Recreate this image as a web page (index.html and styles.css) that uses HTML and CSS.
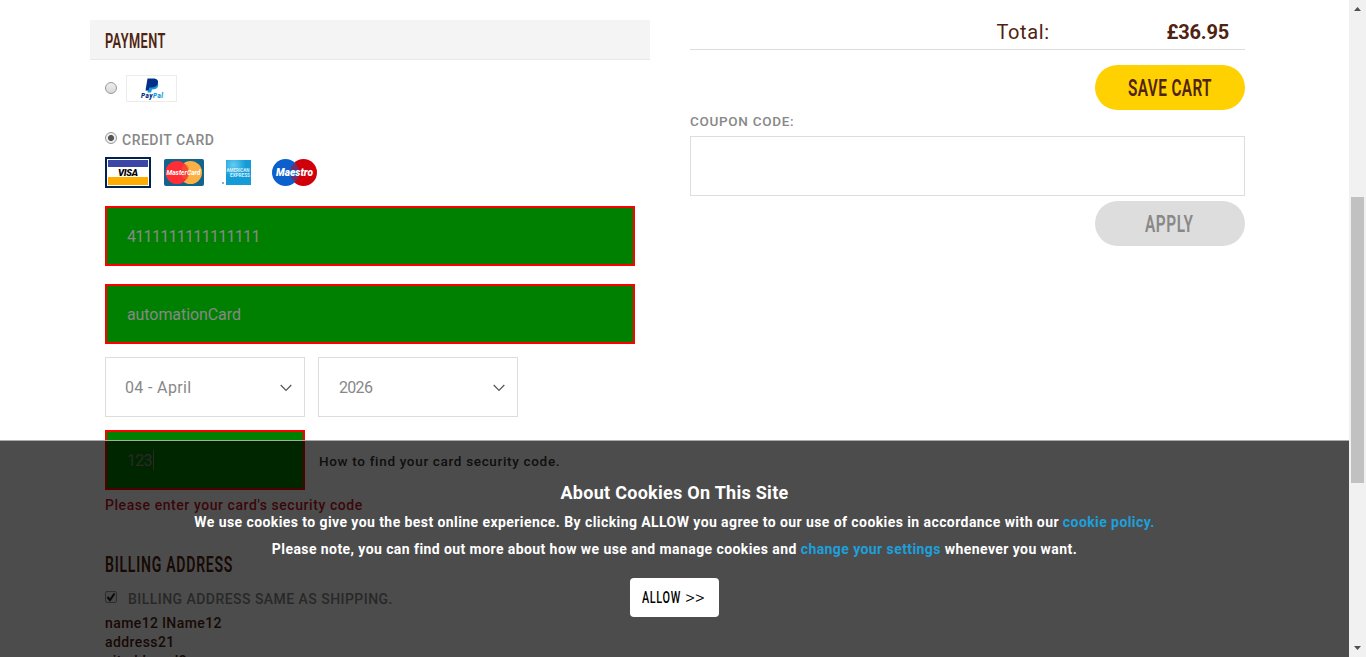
FILE: index.html
```html
<!DOCTYPE html>
<html lang="en">
<head>
<meta charset="utf-8">
<title>Checkout</title>
<link rel="stylesheet" href="styles.css">
</head>
<body>
<div class="window">
  <main class="page">
    <section class="payment">
      <h2 class="section-title"><span class="narrow t-payment">PAYMENT</span></h2>
      <div class="payment-body">
        <div class="paypal-row">
          <span class="radio"></span>
          <span class="paypal">
            <svg width="50" height="26" viewBox="0 0 50 26">
              <path d="M22 5.500h7q3 2 2 5-1 3-6 3l-1 3h-3.500z" fill="#179bd7"/>
              <path d="M20.500 2.500h7q5 1 3 6-2 3-6 3h-2l-1 3h-3z" fill="#003087"/>
              <text x="14" y="22" class="paypal-text" textLength="22"><tspan fill="#003087">Pay</tspan><tspan fill="#179bd7">Pal</tspan></text>
            </svg>
          </span>
        </div>
        <div class="credit-row"><span class="radio checked"></span><span class="t-credit">CREDIT CARD</span></div>
        <div class="cards">
          <svg width="46" height="31" viewBox="0 0 46 31">
            <path d="M0 0h46v31H0z" fill="#00224f"/><path d="M2 2h42v27H2z" fill="#fff"/>
            <path d="M3 3h40v7H3z" fill="#3a47a5"/><path d="M3 20h40v8H3z" fill="#ffad00"/>
            <text x="13" y="18.500" class="visa" textLength="20">VISA</text>
          </svg>
          <svg width="40" height="27" viewBox="0 0 40 27">
            <rect width="40" height="27" rx="2" fill="#11648c"/>
            <circle cx="26.500" cy="13.500" r="11.500" fill="#fdb044"/><circle cx="13" cy="13.500" r="11.500" fill="#ff2d36"/>
            <path d="M19 7h5M18 9h7M18 11h7M18 17h7M19 19h5" stroke="#e86b31"/>
            <text x="2.500" y="16" class="mastercard" textLength="34" lengthAdjust="spacingAndGlyphs">MasterCard</text>
          </svg>
          <svg width="30" height="27" viewBox="0 0 30 27">
            <defs><radialGradient id="amex" cx=".3" cy=".2"><stop stop-color="#63cdf2"/><stop offset="1" stop-color="#159bd7"/></radialGradient></defs>
            <path d="M5 1h25v25H5z" fill="url(#amex)"/><path d="M1 23h2v2H1z" fill="#72bdcf"/>
            <text x="5.500" y="13" class="amex" textLength="23" lengthAdjust="spacingAndGlyphs">AMERICAN</text>
            <text x="9" y="18" class="amex" textLength="20" lengthAdjust="spacingAndGlyphs">EXPRESS</text>
          </svg>
          <svg width="46" height="27" viewBox="0 0 46 27">
            <circle cx="31.500" cy="13.500" r="13.500" fill="#d0000b"/><circle cx="13.500" cy="13.500" r="13.500" fill="#0b60ce"/>
            <path d="M21 6h4M19 8h7M19 10h8M19 18h8M20 20h6M22 22h3" stroke="#d0000b"/>
            <text x="4" y="17" class="maestro" textLength="37" lengthAdjust="spacingAndGlyphs">Maestro</text>
          </svg>
        </div>
        <div class="field invalid"><span class="t-number">4111111111111111</span></div>
        <div class="field invalid second"><span class="t-holder">automationCard</span></div>
        <div class="selects">
          <div class="field half"><span class="t-month">04 - April</span><svg width="12" height="8" viewBox="0 0 12 8"><path d="M.700 1l5.300 5.500L11.300 1" fill="none" stroke="#555" stroke-width="1.200"/></svg></div>
          <div class="field half"><span class="t-year">2026</span><svg width="12" height="8" viewBox="0 0 12 8"><path d="M.700 1l5.300 5.500L11.300 1" fill="none" stroke="#555" stroke-width="1.200"/></svg></div>
        </div>
        <div class="security">
          <div class="field half invalid"><span class="t-cvv">123</span><i class="caret"></i></div>
          <span class="t-how">How to find your card security code.</span>
        </div>
        <div class="error">Please enter your card's security code</div>
        <h2 class="billing-title"><span class="narrow t-billing">BILLING ADDRESS</span></h2>
        <div class="same-row">
          <svg width="12" height="12" viewBox="0 0 12 12"><rect x=".5" y=".5" width="11" height="11" rx="1.500" fill="#f3f3f3" stroke="#999"/><path d="M2.500 6l2.500 3 4.500-6.500" fill="none" stroke="#222" stroke-width="2"/></svg>
          <span class="t-same">BILLING ADDRESS SAME AS SHIPPING.</span>
        </div>
        <div class="address"><div>name12 lName12</div><div>address21</div><div>citaddressl2</div></div>
      </div>
    </section>
    <section class="summary">
      <div class="total"><span class="t-total">Total:</span><span class="t-price">£36.95</span></div>
      <div class="button save"><span class="narrow t-save">SAVE CART</span></div>
      <div class="coupon-label">COUPON CODE:</div>
      <div class="field coupon"></div>
      <div class="button apply"><span class="narrow t-apply">APPLY</span></div>
    </section>
    <aside class="cookies">
      <h3 class="cookie-title">About Cookies On This Site</h3>
      <p class="cookie-line line-a">We use cookies to give you the best online experience. By clicking ALLOW you agree to our use of cookies in accordance with our <a>cookie policy.</a></p>
      <p class="cookie-line line-b">Please note, you can find out more about how we use and manage cookies and <a>change your settings</a> whenever you want.</p>
      <div class="allow"><span class="allow-word"><span class="narrow t-allow">ALLOW</span></span><span class="arrows">&gt;&gt;</span></div>
    </aside>
  </main>
  <div class="scrollbar">
    <svg width="7" height="4" viewBox="0 0 7 4"><path d="M0 4l3.500-4L7 4z" fill="#505050"/></svg>
    <div class="thumb"></div>
    <svg class="down" width="7" height="4" viewBox="0 0 7 4"><path d="M0 0l3.500 4L7 0z" fill="#505050"/></svg>
  </div>
</div>
</body>
</html>
```
FILE: styles.css
```css
* { box-sizing: border-box; }
body { margin: 0; font-family: Roboto, "Liberation Sans", sans-serif; font-size: 14px; color: #4f2310; overflow: hidden; }
h2, h3, p { margin: 0; font-weight: 500; }
svg { display: block; flex: none; overflow: visible; }
span { white-space: nowrap; }
.window { display: flex; height: 657px; }
.page { position: relative; width: 1349px; height: 657px; overflow: hidden; display: flex; gap: 40px; padding: 0 0 0 90px; background: #fff; }
.payment { width: 560px; padding-top: 20px; flex: none; }
.narrow { display: inline-block; transform: scaleX(.64); transform-origin: left; font-weight: 600; letter-spacing: .6px; }
.section-title { height: 40px; line-height: 43px; font-size: 20px; background: #f4f4f4; border-bottom: 1px solid #e8e8e8; padding-left: 14.5px; }
.payment-body { padding: 15px 15px 0; }
.paypal-row { display: flex; align-items: center; height: 27px; gap: 9px; }
.paypal { border: 1px solid #ececec; width: 51px; height: 27px; }
.paypal-text { font: italic 900 6.5px Roboto, sans-serif; }
.radio { width: 12px; height: 12px; border: 1px solid #999; border-radius: 50%; background: linear-gradient(#eee, #d8d8d8); flex: none; }
.paypal-row .radio { margin-bottom: 2px; }
.radio.checked { background: radial-gradient(circle, #555 0 2.700px, #eee 3.300px); }
.credit-row { display: flex; margin-top: 30px; height: 16px; line-height: 17px; gap: 5px; color: #888; font-weight: 500; }
.t-credit { letter-spacing: .5px; }
.cards { display: flex; align-items: center; height: 31px; margin-top: 9px; }
.cards svg:nth-child(2) { margin-left: 13px; }
.cards svg:nth-child(3) { margin-left: 17px; }
.cards svg:nth-child(4) { margin-left: 21px; }
.visa { font: italic 900 9.5px Roboto, sans-serif; }
.mastercard { font: italic 700 8px Roboto, sans-serif; fill: #fff; }
.amex { font: 700 5.5px Roboto, sans-serif; fill: #d5f1fc; }
.maestro { font: italic 900 10.5px Roboto, sans-serif; fill: #fff; }
.field { height: 60px; border: 1px solid #ddd; display: flex; align-items: center; padding: 0 12px 0 20px; font-size: 16px; color: #888; font-weight: 300; background: #fff; }
.field svg { margin-top: 1px; }
.invalid { border: 2px solid #f00; background: #008000; margin-top: 18px; }
.t-number { letter-spacing: -.7px; font-weight: 400; }
.t-holder { font-weight: 400; letter-spacing: -.08px; }
.half { width: 200px; justify-content: space-between; }
.selects { display: flex; gap: 13px; margin-top: 13px; }
.t-month, .t-year { font-weight: 400; padding-top: 1px; }
.t-month { letter-spacing: .35px; margin-left: -1px; }
.t-year { letter-spacing: -.7px; }
.t-cvv { letter-spacing: -.8px; font-weight: 400; }
.security { display: flex; margin-top: 13px; gap: 14px; align-items: center; }
.security .invalid { margin-top: 0; justify-content: flex-start; }
.caret { width: 1px; height: 20px; background: #888; margin-left: 1px; }
.t-how { font-size: 13.5px; font-weight: 500; color: #333; letter-spacing: .67px; padding-top: 2px; }
.error { height: 30px; line-height: 31px; font-weight: 500; color: #c4162a; letter-spacing: .56px; }
.billing-title { font-size: 22px; height: 30px; line-height: 30px; margin-top: 30px; }
.t-billing { letter-spacing: 1.15px; }
.same-row { display: flex; align-items: center; gap: 11px; height: 20px; margin-top: 7px; color: #888; font-weight: 500; }
.t-same { letter-spacing: .46px; padding-top: 3px; }
.address { margin-top: 7px; line-height: 19px; font-weight: 500; letter-spacing: .42px; }
.summary { width: 555px; flex: none; }
.total { display: flex; height: 50px; border-bottom: 1px solid #ddd; padding: 16px 16px 0 0; justify-content: flex-end; gap: 117px; font-size: 20px; line-height: 33px; }
.t-total { letter-spacing: .6px; }
.t-price { font-weight: 700; letter-spacing: -.2px; }
.button { width: 150px; height: 45px; border-radius: 23px; margin-left: auto; font-size: 24px; line-height: 47px; font-weight: 500; }
.save { background: #ffd100; margin-top: 15px; padding-left: 33px; }
.apply { background: #ddd; margin-top: 5px; color: #888; padding-left: 50px; }
.t-apply { letter-spacing: .9px; }
.coupon-label { height: 26px; line-height: 22px; color: #888; font-weight: 500; font-size: 13.5px; letter-spacing: .7px; }
.cookies { position: absolute; left: 0; right: 0; top: 440px; height: 217px; border-top: 1px solid #aaa; background: rgba(0,0,0,.7); background-clip: padding-box; color: #fff; text-align: center; display: flex; flex-direction: column; align-items: center; padding-top: 39px; }
.cookie-title { font-size: 18px; line-height: 26px; letter-spacing: .28px; font-weight: 700; }
.cookie-line { font-weight: 700; line-height: 27px; white-space: nowrap; margin-top: 3px; letter-spacing: .42px; }
.line-b { margin-top: 0; }
.cookie-line a { color: #1ca0dc; }
.allow { display: flex; width: 89px; height: 39px; margin-top: 15px; background: #fff; color: #000; border-radius: 4px; text-align: left; padding-left: 12px; font-size: 17px; line-height: 39px; }
.allow-word { width: 43px; }
.t-allow { font-weight: 500; letter-spacing: 1px; }
.arrows { font-size: 19px; font-weight: 300; }
.scrollbar { width: 17px; height: 657px; background: #f1f1f1; display: flex; flex-direction: column; align-items: center; padding: 7px 0; }
.thumb { width: 13px; height: 286px; background: #c1c1c1; margin-top: 186px; }
.down { margin-top: auto; }
```
